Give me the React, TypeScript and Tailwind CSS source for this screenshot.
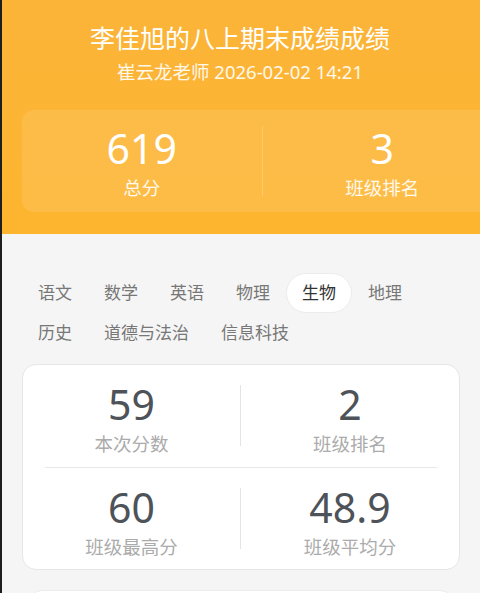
const subjects = [
  ["语文", "数学", "英语", "物理", "生物", "地理"],
  ["历史", "道德与法治", "信息科技"],
];

const stats = [
  { value: "59", label: "本次分数" },
  { value: "2", label: "班级排名" },
  { value: "60", label: "班级最高分" },
  { value: "48.9", label: "班级平均分" },
];

export default function App() {
  const active = "生物";
  return (
    <main
      className="w-[480px] h-[593px] overflow-hidden bg-[#f5f5f5] border-l-2 border-[#1e1e1e]"
      style={{ fontFamily: '"Noto Sans", "Noto Sans CJK SC", sans-serif' }}
    >
      {/* Header */}
      <header className="h-[234px] bg-gradient-to-b from-[#fbb438] to-[#fdb52f] text-white overflow-hidden">
        <h1 className="pt-[20px] text-center text-[25px] leading-[36px] -ml-[2px]">
          李佳旭的八上期末成绩成绩
        </h1>
        <p className="mt-[1px] text-center text-[18.5px] leading-[30px] text-white/90 -ml-[2px]">
          崔云龙老师 2026-02-02 14:21
        </p>
        <div className="mt-[23px] ml-[20px] w-[480px] h-[102px] rounded-[12px] bg-white/10 flex">
          <div className="flex-1 flex flex-col items-center pt-[14px]">
            <span className="text-[41px] leading-[48px]">619</span>
            <span className="text-[18.5px] leading-[26px] text-white/90 mt-[3px]">总分</span>
          </div>
          <div className="w-px h-[70px] mt-[16px] bg-white/20" />
          <div className="flex-1 flex flex-col items-center pt-[14px]">
            <span className="text-[41px] leading-[48px]">3</span>
            <span className="text-[18.5px] leading-[26px] text-white/90 mt-[3px]">班级排名</span>
          </div>
        </div>
      </header>

      {/* Subject tabs */}
      <section className="pt-[39px] pl-[20px]">
        {subjects.map((row, i) => (
          <div key={i} className="flex">
            {row.map((s) => (
              <span
                key={s}
                className={
                  s === active
                    ? "h-[40px] px-[15px] flex items-center rounded-full bg-white border border-[#ececec] text-[17px] text-[#333]"
                    : "h-[40px] px-[16px] flex items-center text-[17px] text-[#777]"
                }
              >
                {s}
              </span>
            ))}
          </div>
        ))}
      </section>

      {/* Score card */}
      <section className="mt-[11px] mx-[20px] bg-white rounded-[14px] border border-[#e6e6e6]">
        <div className="grid grid-cols-2 h-[102px]">
          {stats.slice(0, 2).map((s, i) => (
            <Cell key={s.label} {...s} divider={i === 0} />
          ))}
        </div>
        <div className="h-px mx-[22px] bg-[#e8e8e8]" />
        <div className="grid grid-cols-2 h-[101px]">
          {stats.slice(2).map((s, i) => (
            <Cell key={s.label} {...s} divider={i === 0} />
          ))}
        </div>
      </section>

      <div className="mt-[20px] mx-[26px] h-[40px] bg-white rounded-t-[14px] border border-[#ececec]" />
    </main>
  );
}

function Cell({ value, label, divider }: { value: string; label: string; divider: boolean }) {
  return (
    <div className="flex">
      <div className="flex-1 flex flex-col items-center pt-[16px]">
        <span className="text-[41px] leading-[46px] text-[#4d5358]">{value}</span>
        <span className="text-[18.5px] leading-[24px] text-[#ababab] mt-[5px]">{label}</span>
      </div>
      {divider && <div className="w-px h-[61px] mt-[20px] bg-[#e4e4e4]" />}
    </div>
  );
}
